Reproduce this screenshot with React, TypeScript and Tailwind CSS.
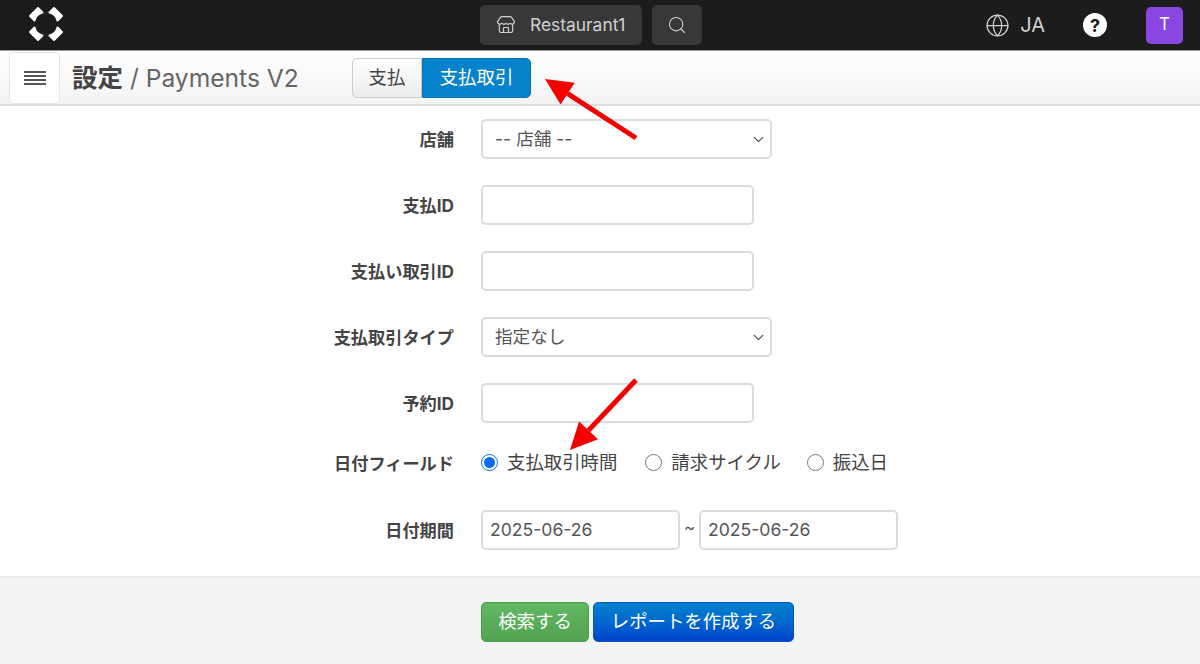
import React from "react";
import { Store, Search, Globe, ChevronDown } from "lucide-react";

const font = "font-['Inter','Noto_Sans_CJK_JP',sans-serif]";

function Row({ label, children, className = "mb-[26px]" }: { label: string; children: React.ReactNode; className?: string }) {
  return (
    <div className={`flex items-center h-[40px] ${className}`}>
      <div className="w-[454px] text-right text-[17.2px] font-bold text-[#444] pt-[1px]">{label}</div>
      <div className="ml-[27px] flex items-center">{children}</div>
    </div>
  );
}

function Input({ value = "", w = "w-[273px]" }: { value?: string; w?: string }) {
  return (
    <div className={`${w} h-[40px] rounded-[5px] border-2 border-[#dcdcdc] bg-white pl-[7px] flex items-center text-[17.6px] text-[#555] pt-[1px]`}>
      {value}
    </div>
  );
}

function Select({ value }: { value: string }) {
  return (
    <div className="w-[291px] h-[40px] rounded-[5px] border-2 border-[#dcdcdc] bg-white pl-[12px] pr-[3px] flex items-center justify-between text-[17.6px] text-[#555]">
      <span>{value}</span>
      <ChevronDown size={17} strokeWidth={1.8} className="text-[#555]" />
    </div>
  );
}

function Radio({ label, on = false, className = "" }: { label: string; on?: boolean; className?: string }) {
  return (
    <div className={`flex items-center ${className}`}>
      {on ? (
        <span className="w-[17px] h-[17px] rounded-full border-[1.5px] border-[#0a6cf5] flex items-center justify-center">
          <span className="w-[11px] h-[11px] rounded-full bg-[#0a6cf5]" />
        </span>
      ) : (
        <span className="w-[17px] h-[17px] rounded-full border border-[#777] bg-white" />
      )}
      <span className="ml-[9px] text-[18.4px] text-[#444]">{label}</span>
    </div>
  );
}

function Logo() {
  const piece = "M-8 -16 L-3.5 -11.5 Q-10 -10 -11.5 -3.5 L-16 -8 Z";
  return (
    <svg width="36" height="36" viewBox="-18 -18 36 36" fill="#fff" stroke="#fff" strokeWidth="2" strokeLinejoin="round">
      <path d={piece} />
      <path d={piece} transform="rotate(90)" />
      <path d={piece} transform="rotate(180)" />
      <path d={piece} transform="rotate(270)" />
    </svg>
  );
}

function Arrow({ x1, y1, x2, y2 }: { x1: number; y1: number; x2: number; y2: number }) {
  const dx = x2 - x1, dy = y2 - y1;
  const len = Math.hypot(dx, dy);
  const ux = dx / len, uy = dy / len;
  const hl = 27, hw = 13;
  const bx = x2 - ux * hl, by = y2 - uy * hl;
  const pts = `${x2},${y2} ${bx - uy * hw},${by + ux * hw} ${bx + uy * hw},${by - ux * hw}`;
  return (
    <>
      <line x1={x1} y1={y1} x2={bx} y2={by} stroke="#f40000" strokeWidth="5" />
      <polygon points={pts} fill="#f40000" />
    </>
  );
}

export default function App() {
  return (
    <div className={`${font} relative w-[1200px] h-[664px] overflow-hidden bg-white`}>
      <header className="h-[50px] bg-[#1c1c1c] flex items-center relative">
        <div className="ml-[28px] -mt-[2px]"><Logo /></div>
        <div className="absolute left-[480px] top-[5px] flex gap-[10px]">
          <div className="w-[162px] h-[40px] rounded-[5px] bg-[#383838] flex items-center pl-[16px] text-[#d0d0d0]">
            <Store size={20} strokeWidth={1.4} />
            <span className="ml-[14px] text-[17.4px] pt-[1px]">Restaurant1</span>
          </div>
          <div className="w-[50px] h-[40px] rounded-[5px] bg-[#383838] flex items-center justify-center text-[#d0d0d0]">
            <Search size={20} strokeWidth={1.3} />
          </div>
        </div>
        <div className="ml-auto flex items-center text-[#d0d0d0]">
          <Globe size={25} strokeWidth={1.2} />
          <span className="ml-[10px] text-[20px]">JA</span>
          <span className="ml-[38px] w-[24px] h-[24px] rounded-full bg-white text-[#1c1c1c] font-bold text-[18px] flex items-center justify-center">?</span>
          <span className="ml-[39px] mr-[17px] w-[37px] h-[37px] rounded-[5px] bg-[#8a46e0] text-white text-[17px] flex items-center justify-center">T</span>
        </div>
      </header>

      <div className="h-[56px] bg-gradient-to-b from-white to-[#f3f3f3] border-b-2 border-[#ddd] border-t border-t-[#999] flex items-center relative">
        <div className="ml-[9px] w-[51px] h-[52px] rounded-[4px] bg-white border border-[#e6e6e6] flex flex-col items-center justify-center gap-[2px]">
          <span className="block w-[22px] h-[2px] bg-[#555]" />
          <span className="block w-[22px] h-[2px] bg-[#555]" />
          <span className="block w-[22px] h-[2px] bg-[#555]" />
          <span className="block w-[22px] h-[2px] bg-[#555]" />
        </div>
        <div className="ml-[12px] w-[280px] text-[24.6px] text-[#666] whitespace-nowrap pt-[1px]">
          <span className="font-bold text-[#444] text-[25.5px]">設定</span> / Payments V2
        </div>
        <div className="flex h-[40px] text-[18.4px]">
          <div className="w-[70px] rounded-l-[5px] border border-[#ccc] bg-gradient-to-b from-white to-[#ececec] flex items-center justify-center text-[#444]">支払</div>
          <div className="w-[109px] rounded-r-[5px] bg-[#0683cc] border border-[#0673b4] flex items-center justify-center text-white">支払取引</div>
        </div>
      </div>

      <main className="pt-[13px] h-[470px]">
        <Row label="店舗"><Select value="-- 店舗 --" /></Row>
        <Row label="支払ID"><Input /></Row>
        <Row label="支払い取引ID"><Input /></Row>
        <Row label="支払取引タイプ"><Select value="指定なし" /></Row>
        <Row label="予約ID" className="mb-[20px] mt-[1px]"><Input /></Row>
        <Row label="日付フィールド" className="mb-[27px]">
          <Radio label="支払取引時間" on />
          <Radio label="請求サイクル" className="ml-[28px]" />
          <Radio label="振込日" className="ml-[26px]" />
        </Row>
        <Row label="日付期間">
          <Input value="2025-06-26" w="w-[199px]" />
          <span className="w-[19px] text-center text-[17px] text-[#555] -mt-[4px]">~</span>
          <Input value="2025-06-26" w="w-[199px]" />
        </Row>
      </main>

      <footer className="h-[88px] bg-[#f4f4f4] border-t-2 border-[#e9e9e9] flex items-start pl-[481px] pt-[24px] gap-[4px]">
        <div className="w-[108px] h-[40px] rounded-[5px] bg-gradient-to-b from-[#62b862] to-[#51a351] border border-[#4c9c4c] text-white text-[18.4px] flex items-center justify-center">検索する</div>
        <div className="w-[201px] h-[40px] rounded-[5px] bg-gradient-to-b from-[#0683cc] to-[#0044cc] border border-[#0a55c4] text-white text-[18.4px] flex items-center justify-center">レポートを作成する</div>
      </footer>

      <svg className="absolute left-0 top-0 pointer-events-none" width="1200" height="664">
        <Arrow x1={636} y1={138} x2={545} y2={79} />
        <Arrow x1={636} y1={380} x2={570} y2={450} />
      </svg>
    </div>
  );
}
